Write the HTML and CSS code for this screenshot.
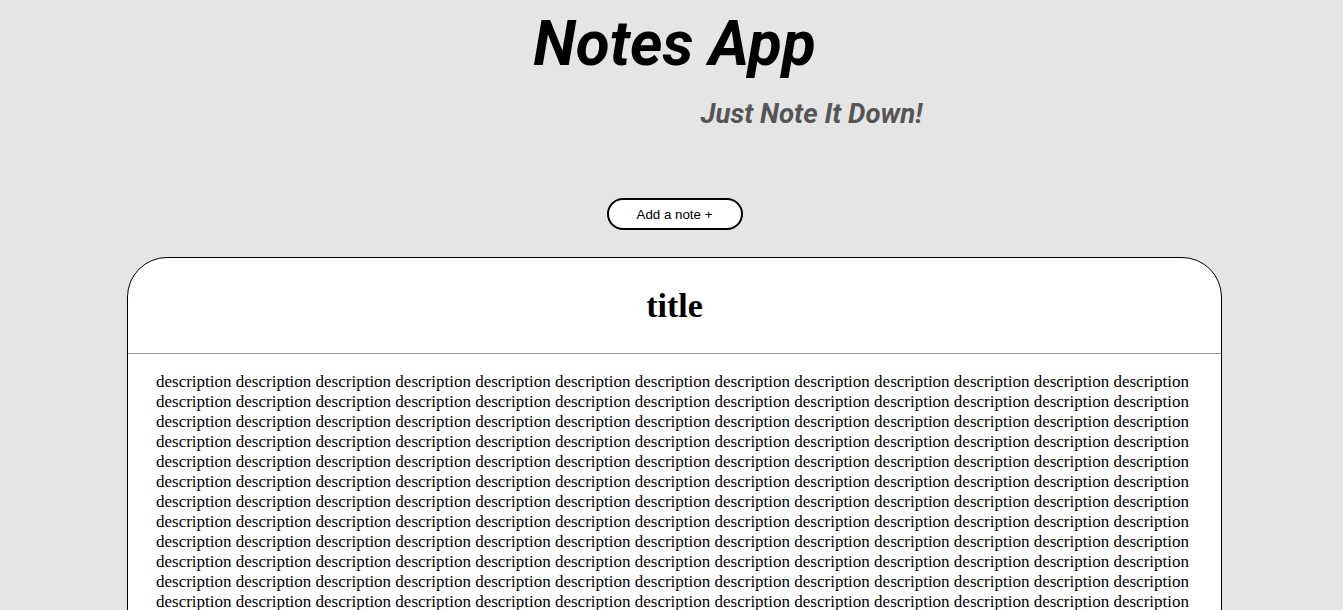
FILE: index.html
```html
<!DOCTYPE html>
<html>
<head>
<meta charset="utf-8">
<title>Notes App</title>
<link rel="stylesheet" href="styles.css">
</head>
<body>
<header class="masthead">
  <h1 class="app-title">Notes App</h1>
  <h2 class="app-tagline">Just Note It Down!</h2>
</header>
<div class="actions">
  <button class="add-btn">Add a note +</button>
</div>
<main class="notes">
  <article class="note">
    <div class="note-head"><h1 class="note-title">title</h1></div>
    <p class="note-body">description description description description description description description description description description description description description description description description description description description description description description description description description description description description description description description description description description description description description description description description description description description description description description description description description description description description description description description description description description description description description description description description description description description description description description description description description description description description description description description description description description description description description description description description description description description description description description description description description description description description description description description description description description description description description description description description description description description description description description description description description description description description description description description description description description description description description description description description description description description description description description description description description description description description description description description description description description description description description description description description description description description description description description description description description description description description description description description description description description description description description description description description description description description description description description description description description description description description description description description description description description description description description description description description description description description description description description description description description description description description description description description description description description description description description description description description description description description description description description description description description description description description description description description description description description description description description description description description description description description description description description description description description description description description description description description description description description description description description description description description description description description description description description description description description description description description description description description description description description description description description description description description description description description description description description description description description description description description description description description description description description description description description description description description description description description description description description description description description description description description description description description description description description description description description description description description description description description description description description description description description description description description description description description description description description description description description description description description description description description description description description</p>
  </article>
</main>
</body>
</html>
```
FILE: styles.css
```css
html, body {
  margin: 0;
  padding: 0;
}
body {
  background: #e5e5e5;
  font-family: "Liberation Serif", "Times New Roman", serif;
  padding: 8px 0 8px 6px;
}
.masthead {
  display: flex;
  flex-direction: column;
  align-items: center;
}
.app-title {
  margin: 0;
  font-family: Roboto, sans-serif;
  font-weight: 700;
  font-style: italic;
  font-size: 62px;
  line-height: 72px;
  color: #000;
}
.app-tagline {
  margin: 17px 0 0 274px;
  font-family: Roboto, sans-serif;
  font-weight: 700;
  font-style: italic;
  font-size: 27.6px;
  line-height: 34px;
  color: #555;
}
.actions {
  display: flex;
  justify-content: center;
  margin-top: 67px;
}
.add-btn {
  width: 136px;
  height: 32px;
  background: #fff;
  border: 2px solid #000;
  border-radius: 16px;
  font-family: "Liberation Sans", Arial, sans-serif;
  font-size: 13.33px;
  color: #000;
  padding: 0;
}
.notes {
  display: flex;
  justify-content: center;
  margin-top: 27px;
}
.note {
  width: 1095px;
  box-sizing: border-box;
  background: #fff;
  border: 1px solid #000;
  border-radius: 40px 40px 0 0;
}
.note-head {
  height: 95px;
  display: flex;
  align-items: center;
  justify-content: center;
  border-bottom: 1px solid #999;
}
.note-title {
  margin: 0;
  font-size: 34px;
  font-weight: 700;
}
.note-body {
  margin: 0;
  padding: 18px 26px 0 28px;
  font-size: 17px;
  line-height: 20px;
}
```
